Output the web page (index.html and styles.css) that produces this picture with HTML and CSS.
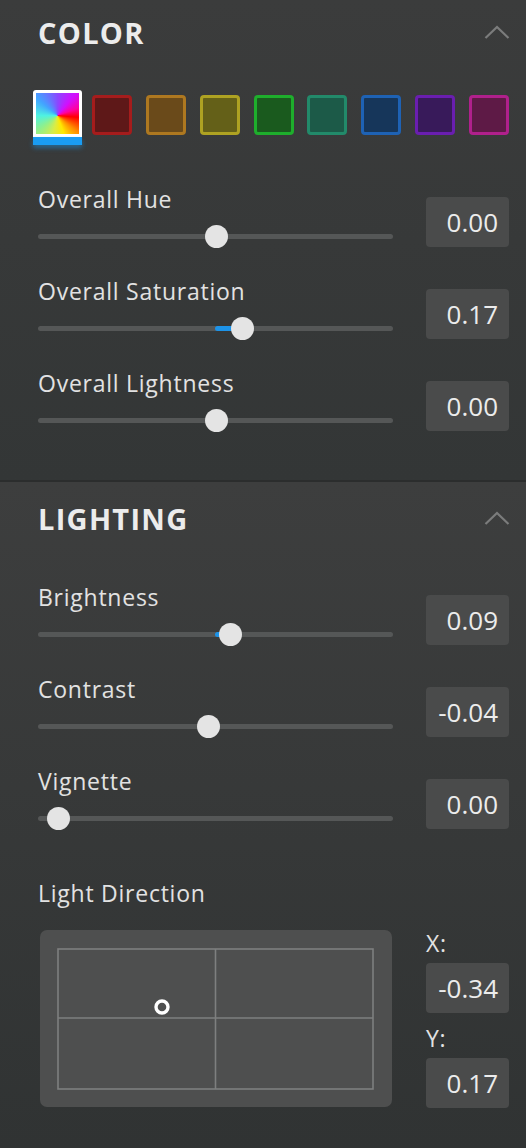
FILE: index.html
```html
<!DOCTYPE html>
<html>
<head>
<meta charset="utf-8">
<link rel="stylesheet" href="styles.css">
</head>
<body>
<div class="panel">
  <section class="section sec-color">
    <div class="head">
      <h2 class="title">COLOR</h2>
      <svg class="chev" width="26" height="15" viewBox="0 0 26 15"><polyline points="1.5,13 13,2 24.5,13" fill="none" stroke="#7b7c7c" stroke-width="2.2"/></svg>
    </div>
    <div class="swatches">
      <div class="sw sw-all"></div>
      <div class="sw sw-red"></div>
      <div class="sw sw-orange"></div>
      <div class="sw sw-yellow"></div>
      <div class="sw sw-green"></div>
      <div class="sw sw-teal"></div>
      <div class="sw sw-blue"></div>
      <div class="sw sw-purple"></div>
      <div class="sw sw-magenta"></div>
    </div>
    <div class="rows rows-color">
      <div class="row">
        <div class="ctl">
          <div class="label">Overall Hue</div>
          <div class="track"><div class="rail"></div><div class="knob" style="left:178px"></div></div>
        </div>
        <div class="val">0.00</div>
      </div>
      <div class="row">
        <div class="ctl">
          <div class="label">Overall Saturation</div>
          <div class="track"><div class="rail"></div><div class="fill" style="left:177px;width:27px"></div><div class="knob" style="left:204px"></div></div>
        </div>
        <div class="val">0.17</div>
      </div>
      <div class="row">
        <div class="ctl">
          <div class="label">Overall Lightness</div>
          <div class="track"><div class="rail"></div><div class="knob" style="left:178px"></div></div>
        </div>
        <div class="val">0.00</div>
      </div>
    </div>
  </section>
  <section class="section sec-light">
    <div class="head">
      <h2 class="title">LIGHTING</h2>
      <svg class="chev" width="26" height="15" viewBox="0 0 26 15"><polyline points="1.5,13 13,2 24.5,13" fill="none" stroke="#7b7c7c" stroke-width="2.2"/></svg>
    </div>
    <div class="rows rows-light">
      <div class="row">
        <div class="ctl">
          <div class="label">Brightness</div>
          <div class="track"><div class="rail"></div><div class="fill" style="left:177px;width:15px"></div><div class="knob" style="left:192px"></div></div>
        </div>
        <div class="val">0.09</div>
      </div>
      <div class="row">
        <div class="ctl">
          <div class="label">Contrast</div>
          <div class="track"><div class="rail"></div><div class="knob" style="left:170px"></div></div>
        </div>
        <div class="val">-0.04</div>
      </div>
      <div class="row">
        <div class="ctl">
          <div class="label">Vignette</div>
          <div class="track"><div class="rail"></div><div class="knob" style="left:20px"></div></div>
        </div>
        <div class="val">0.00</div>
      </div>
    </div>
    <div class="lightdir">
      <div class="label">Light Direction</div>
      <div class="ld-body">
        <div class="pad">
          <svg width="352" height="177" viewBox="0 0 352 177">
            <rect x="18" y="19" width="315" height="140" fill="none" stroke="#7e7f7f" stroke-width="1.6"/>
            <line x1="175.5" y1="19" x2="175.5" y2="159" stroke="#7e7f7f" stroke-width="1.6"/>
            <line x1="18" y1="88" x2="333" y2="88" stroke="#7e7f7f" stroke-width="1.6"/>
            <circle cx="122" cy="77" r="6" fill="none" stroke="#ffffff" stroke-width="3.4"/>
          </svg>
        </div>
        <div class="xy">
          <div class="label">X:</div>
          <div class="val val-x">-0.34</div>
          <div class="label label-y">Y:</div>
          <div class="val val-y">0.17</div>
        </div>
      </div>
    </div>
  </section>
</div>
</body>
</html>
```
FILE: styles.css
```css
* { box-sizing: border-box; }
html, body { margin: 0; padding: 0; }
body {
  width: 526px;
  height: 1148px;
  overflow: hidden;
  background: #303333;
  font-family: "Open Sans", "DejaVu Sans", sans-serif;
  color: #e4e4e4;
}
.panel { width: 526px; }
.section { padding: 0 17px 0 38px; }
.sec-color {
  height: 480px;
  background: linear-gradient(#3b3c3c, #333636);
  border-bottom: 2px solid #2b2d2d;
  box-sizing: content-box;
}
.sec-light {
  height: 666px;
  padding-top: 4px;
  background: linear-gradient(#3d3e3e, #303333);
}
.head {
  height: 66px;
  display: flex;
  align-items: center;
  justify-content: space-between;
}
.title {
  margin: 0;
  font-size: 29px;
  font-weight: 700;
  letter-spacing: 1.3px;
  line-height: 34px;
  color: #ececec;
}
.chev { display: block; margin-top: -1px; margin-right: -1px; }

.swatches {
  margin-top: 29px;
  height: 40px;
  display: flex;
  justify-content: space-between;
  align-items: flex-start;
}
.sw {
  width: 40px;
  height: 40px;
  border: 3px solid;
  border-radius: 4px;
  flex: none;
}
.sw-all {
  position: relative;
  width: 49px;
  height: 47px;
  margin: -5px -4px 0 -5px;
  border: 3px solid #ffffff;
  border-radius: 3px 3px 0 0;
  background: conic-gradient(from 0deg at 50% 55%, #8a48ff 0deg, #d010ff 40deg, #ff00a0 70deg, #ff0000 95deg, #ff9000 130deg, #ffe800 160deg, #d8ec48 195deg, #8cf090 235deg, #4ef2e2 270deg, #42a4ff 310deg, #8a48ff 360deg);
}
.sw-all::after {
  content: "";
  position: absolute;
  left: -3px;
  right: -3px;
  top: 44px;
  height: 8px;
  background: #1a9cf2;
  box-shadow: 0 3px 5px rgba(26, 156, 242, 0.45);
}
.sw-red { border-color: #a51c1c; background: #5e1818; }
.sw-orange { border-color: #ae7820; background: #6a4a1a; }
.sw-yellow { border-color: #aea222; background: #646018; }
.sw-green { border-color: #1eae2c; background: #1a5a1e; }
.sw-teal { border-color: #228a6a; background: #1c5a48; }
.sw-blue { border-color: #1e62b4; background: #16365a; }
.sw-purple { border-color: #6a1eb0; background: #381a5a; }
.sw-magenta { border-color: #b0208c; background: #5e1a46; }

.rows { display: flex; flex-direction: column; gap: 28px; }
.rows-color { margin-top: 49px; }
.rows-light { margin-top: 30px; }
.row { display: flex; gap: 33px; align-items: flex-start; }
.ctl { flex: 1; }
.label {
  font-size: 23px;
  line-height: 30px;
  letter-spacing: 0.75px;
  color: #e2e2e2;
}
.track { position: relative; height: 23px; margin-top: 11px; }
.rail {
  position: absolute;
  left: 0; right: 0; top: 9px;
  height: 5px;
  border-radius: 3px;
  background: #555757;
}
.fill {
  position: absolute;
  top: 9px;
  height: 5px;
  background: #1d93e8;
  border-radius: 3px 0 0 3px;
}
.knob {
  position: absolute;
  top: 0;
  width: 23px;
  height: 23px;
  margin-left: -11.5px;
  border-radius: 50%;
  background: #e4e4e4;
}
.val {
  width: 83px;
  height: 50px;
  margin-top: 12.5px;
  border-radius: 4px;
  background: #4a4b4b;
  font-size: 26px;
  line-height: 50px;
  text-align: right;
  padding-right: 11px;
  color: #ececec;
}

.lightdir { margin-top: 48px; }
.ld-body { display: flex; gap: 33px; margin-top: 22px; align-items: flex-start; }
.pad {
  flex: none;
  width: 352px;
  height: 177px;
  margin-left: 2px;
  margin-right: 1px;
  border-radius: 7px;
  background: #4e4f4f;
}
.pad svg { display: block; }
.xy { width: 83px; margin-top: -2px; }
.xy .val { margin-top: 0; }
.val-x { margin-top: 5px !important; }
.label-y { margin-top: 10px; }
.val-y { margin-top: 5px !important; }
```
